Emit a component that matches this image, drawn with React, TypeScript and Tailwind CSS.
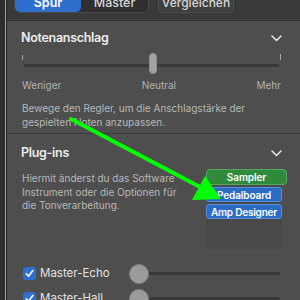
import React from "react";

const Chevron = () => (
  <svg width="11" height="7" viewBox="0 0 11 7" className="block">
    <path d="M1 1 L5.5 5.5 L10 1" fill="none" stroke="#e8e8e8" strokeWidth="1.5" strokeLinecap="round" strokeLinejoin="round" />
  </svg>
);

const Check = () => (
  <div className="w-[13px] h-[13px] rounded-[3px] bg-[#2f6fd3] flex items-center justify-center">
    <svg width="9" height="9" viewBox="0 0 9 9">
      <path d="M1.2 4.8 L3.5 7.2 L7.8 1.5" fill="none" stroke="white" strokeWidth="1.6" strokeLinecap="round" strokeLinejoin="round" />
    </svg>
  </div>
);

export default function App() {
  return (
    <div
      className="w-[300px] h-[300px] overflow-hidden bg-[#2c2c2c] flex relative"
      style={{ fontFamily: "Inter, 'Noto Sans', sans-serif" }}
    >
      <div className="w-[5px] shrink-0 bg-[#2e2e2e]" />
      <div className="w-px shrink-0 bg-[#5fb4e8]" />
      <div className="w-px shrink-0 bg-[#262626]" />
      <div className="flex-1 flex flex-col min-w-0">
        {/* top bar */}
        <div className="h-[21px] shrink-0 bg-[#3a3a3a] border-b border-[#2e2e2e] flex items-start pl-[7px]">
          <div className="-mt-[8px] flex h-[21px] rounded-[5px] bg-[#2f2f2f] border border-[#4a4a4a] overflow-hidden">
            <div className="w-[66px] bg-[#2e6fcd] rounded-[5px] flex items-end justify-center pb-[3px] text-[12.5px] font-semibold text-white leading-none">
              Spur
            </div>
            <div className="w-[67px] flex items-end justify-center pb-[3px] text-[12.5px] font-medium text-[#d6d6d6] leading-none">
              Master
            </div>
          </div>
          <div className="-mt-[8px] ml-[9px] w-[76px] h-[21px] rounded-[5px] bg-[#3f3f3f] border border-[#4c4c4c] flex items-end justify-center pb-[3px] text-[12px] font-medium text-[#d6d6d6] leading-none">
            Vergleichen
          </div>
        </div>

        {/* panel */}
        <div className="flex-1 bg-[#4e4e4e] flex flex-col">
          {/* Notenanschlag */}
          <div className="pl-[14px] pr-[18px] pt-[11px] border-b border-[#3c3c3c] h-[113px] shrink-0">
            <div className="flex items-center justify-between h-[12px]">
              <span className="text-[12.5px] font-semibold tracking-[-0.3px] text-[#ececec] leading-none">Notenanschlag</span>
              <Chevron />
            </div>
            <div className="relative h-[22px] mt-[10px] mx-px">
              <div className="absolute left-0 top-[1px] w-px h-[5px] bg-[#a8a8a8]" />
              <div className="absolute right-0 top-[0px] w-px h-[6px] bg-[#a8a8a8]" />
              <div className="absolute left-[2px] right-[2px] top-[10px] h-[3px] rounded-full bg-[#393939]" />
              <div className="absolute left-[127px] top-[-1px] w-[8px] h-[21px] rounded-full bg-[#a3a3a3] border border-[#8e8e8e]" />
            </div>
            <div className="flex justify-between text-[10px] text-[#b3b3b3] leading-none mt-[4px] px-px">
              <span>Weniger</span>
              <span>Neutral</span>
              <span>Mehr</span>
            </div>
            <div className="mt-[11px] text-[10px] leading-[14px] text-[#b8b8b8] px-px">
              Bewege den Regler, um die Anschlagstärke der gespielten Noten anzupassen.
            </div>
          </div>

          {/* Plug-ins */}
          <div className="pl-[14px] pr-[18px] pt-[13px] flex-1">
            <div className="flex items-center justify-between h-[12px]">
              <span className="text-[12.5px] font-semibold tracking-[-0.3px] text-[#ececec] leading-none">Plug-ins</span>
              <Chevron />
            </div>
            <div className="flex mt-[13px] justify-between">
              <div className="w-[162px] text-[10px] leading-[13.5px] text-[#b8b8b8] px-px">
                Hiermit änderst du das Software Instrument oder die Optionen für die Tonverarbeitung.
              </div>
              <div className="w-[76px] h-[80px] shrink-0 rounded-[4px] bg-[#494949] flex flex-col gap-[2px] -mt-[3px]">
                <div className="w-[81px] h-[16px] rounded-[4px] bg-[#2f8a3b] border border-[#56a861] flex items-center justify-center text-[10px] font-semibold tracking-[-0.1px] text-white leading-none">
                  Sampler
                </div>
                <div className="h-[15px] rounded-[3px] bg-[#2a6cc6] border border-[#5590dc] flex items-center justify-center text-[10px] font-semibold tracking-[-0.1px] text-white leading-none">
                  Pedalboard
                </div>
                <div className="h-[15px] rounded-[3px] bg-[#2a6cc6] border border-[#5590dc] flex items-center justify-center text-[10px] font-semibold tracking-[-0.2px] text-white leading-none whitespace-nowrap">
                  Amp Designer
                </div>
              </div>
            </div>
            <div className="mt-[18px] flex flex-col gap-[12px] pl-[2px]">
              {["Master-Echo", "Master-Hall"].map((l) => (
                <div key={l} className="flex items-center h-[13px]">
                  <Check />
                  <span className="ml-[4px] w-[89px] text-[11.5px] text-[#e2e2e2] leading-none">{l}</span>
                  <div className="relative flex-1 h-[20px] flex items-center mr-[2px]">
                    <div className="absolute left-[10px] right-0 h-[3px] rounded-full bg-[#393939]" />
                    <div className="relative w-[20px] h-[20px] rounded-full bg-[#9b9b9b] border border-[#7f7f7f]" />
                  </div>
                </div>
              ))}
            </div>
          </div>
        </div>
      </div>

      {/* annotation arrow */}
      <svg className="absolute inset-0 pointer-events-none" width="300" height="300">
        <line x1="71" y1="119" x2="202" y2="188" stroke="#00ff00" strokeWidth="4" strokeLinecap="round" />
        <polygon points="221,199 192,200 205,176" fill="#00ff00" />
      </svg>
    </div>
  );
}
